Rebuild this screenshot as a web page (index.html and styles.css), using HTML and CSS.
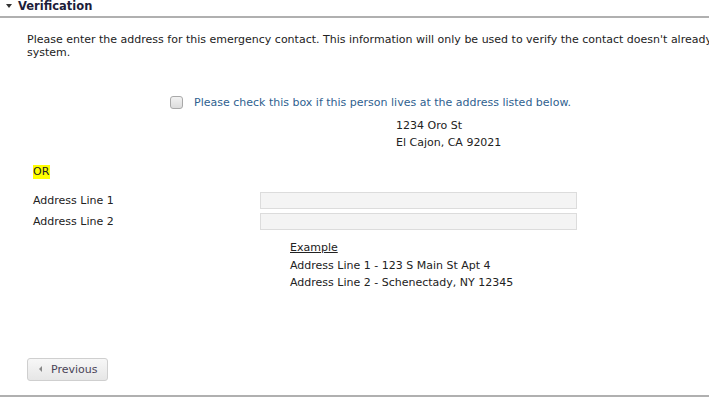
FILE: index.html
```html
<!DOCTYPE html>
<html>
<head>
<meta charset="utf-8">
<link rel="stylesheet" href="styles.css">
</head>
<body>
<div class="page">
  <div class="section-header">
    <span class="caret"></span>
    <span class="title">Verification</span>
  </div>
  <p class="intro">Please enter the address for this emergency contact. This information will only be used to verify the contact doesn't already appear in the system.</p>

  <label class="check-row">
    <span class="checkbox"></span>
    <span class="check-label">Please check this box if this person lives at the address listed below.</span>
  </label>
  <div class="known-address">
    <div>1234 Oro St</div>
    <div>El Cajon, CA 92021</div>
  </div>

  <div class="or-row"><span class="or">OR</span></div>

  <div class="form-rows">
    <div class="form-row">
      <span class="form-label">Address Line 1</span>
      <span class="input"></span>
    </div>
    <div class="form-row">
      <span class="form-label">Address Line 2</span>
      <span class="input"></span>
    </div>
  </div>

  <div class="example">
    <div class="example-title">Example</div>
    <div>Address Line 1 - 123 S Main St Apt 4</div>
    <div>Address Line 2 - Schenectady, NY 12345</div>
  </div>

  <div class="actions">
    <button class="btn"><span class="btn-caret"></span>Previous</button>
  </div>
  <div class="bottom-rule"></div>
</div>
</body>
</html>
```
FILE: styles.css
```css
html, body {
  margin: 0;
  padding: 0;
  overflow: hidden;
  background: #fff;
}
body {
  font-family: "DejaVu Sans", "Liberation Sans", sans-serif;
  font-size: 11px;
  color: #222;
}
.page {
  width: 820px;
  height: 397px;
  display: flex;
  flex-direction: column;
}
.section-header {
  border-bottom: 2px solid #b0b0b0;
  display: flex;
  align-items: flex-start;
  box-sizing: border-box;
  height: 18px;
}
.caret {
  width: 0;
  height: 0;
  border-left: 3.5px solid transparent;
  border-right: 3.5px solid transparent;
  border-top: 4px solid #333;
  margin: 4px 0 0 6px;
}
.title {
  font-weight: bold;
  font-size: 11.5px;
  line-height: 12px;
  color: #1d1d3a;
  margin-left: 6px;
}
.intro {
  margin: 15px 0 0 27px;
  width: 780px;
  line-height: 13px;
}
.check-row {
  display: flex;
  align-items: center;
  margin: 37px 0 0 170px;
  height: 13px;
}
.checkbox {
  width: 11px;
  height: 11px;
  border: 1px solid #a9a9a9;
  border-radius: 3px;
  background: linear-gradient(#f2f2f2, #dcdcdc);
}
.check-label {
  margin-left: 11px;
  color: #2f5f8f;
}
.known-address {
  margin: 8px 0 0 396px;
  line-height: 17px;
}
.or-row {
  margin: 14px 0 0 33px;
}
.or {
  background: #ffff00;
  line-height: 14px;
  display: inline-block;
  padding: 0 1px 0 0;
}
.form-rows {
  margin-top: 13px;
  display: flex;
  flex-direction: column;
  gap: 4px;
}
.form-row {
  display: flex;
  align-items: center;
  height: 17px;
}
.form-label {
  width: 227px;
  margin-left: 33px;
}
.input {
  width: 315px;
  height: 15px;
  border: 1px solid #dcdcdc;
  background: #f4f4f4;
}
.example {
  margin: 9px 0 0 290px;
  line-height: 17.5px;
}
.example-title {
  text-decoration: underline;
}
.actions {
  margin: 66px 0 0 27px;
}
.btn {
  width: 81px;
  height: 23px;
  border: 1px solid #cfcfcf;
  border-radius: 3px;
  background: linear-gradient(#f7f7f7, #e6e6e6);
  font-family: inherit;
  font-size: 11px;
  color: #4a4458;
  display: flex;
  align-items: center;
  padding: 0 0 0 11px;
}
.btn-caret {
  width: 0;
  height: 0;
  border-top: 3px solid transparent;
  border-bottom: 3px solid transparent;
  border-right: 3px solid #888;
  margin-right: 9px;
}
.bottom-rule {
  margin-top: 14px;
  border-top: 2px solid #b0b0b0;
}
```
